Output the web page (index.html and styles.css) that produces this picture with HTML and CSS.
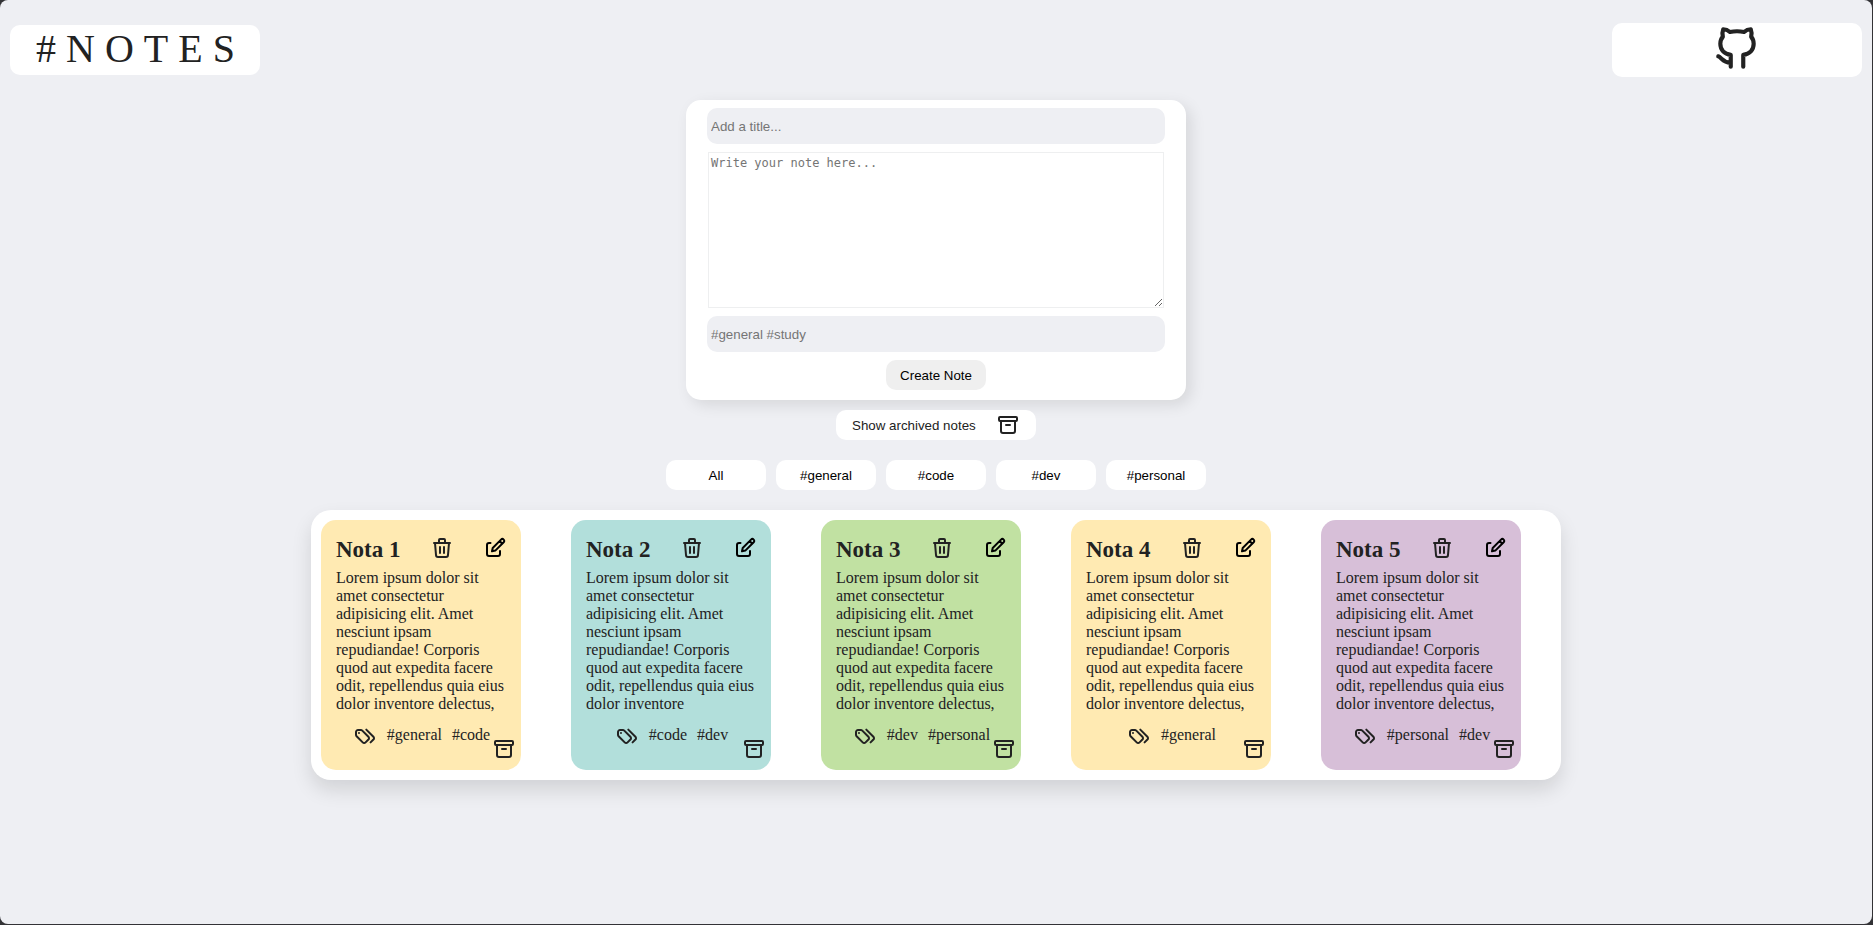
FILE: index.html
```
<!DOCTYPE html>
<html lang="en">
<head>
<meta charset="utf-8">
<title>#NOTES</title>
<link rel="stylesheet" href="styles.css">
</head>
<body>
<svg class="sprite" aria-hidden="true">
  <symbol id="trash" viewBox="0 0 24 24"><path d="M4 7h16M10 11v6M14 11v6M5 7l1 12a2 2 0 0 0 2 2h8a2 2 0 0 0 2-2l1-12M9 7V4a1 1 0 0 1 1-1h4a1 1 0 0 1 1 1v3"/></symbol>
  <symbol id="edit" viewBox="0 0 24 24"><path d="M7.500 7H6a2 2 0 0 0-2 2v9a2 2 0 0 0 2 2h9a2 2 0 0 0 2-2v-3"/><path d="M9 15.200l.7-3.200L18 3.600a1.900 1.900 0 0 1 2.700 2.700L12.300 14.600zM16.600 5l2.700 2.700"/></symbol>
  <symbol id="archive" viewBox="0 0 24 24"><rect x="3" y="4" width="18" height="4" rx="1"/><path d="M5 8v10a2 2 0 0 0 2 2h10a2 2 0 0 0 2-2V8M10 12h4"/></symbol>
  <symbol id="tags" viewBox="0 0 24 24"><path d="M7.859 6H5.025A2.025 2.025 0 0 0 3 8.025v2.834c0 .537.213 1.052.593 1.432l6.116 6.116a2.025 2.025 0 0 0 2.864 0l2.834-2.834a2.025 2.025 0 0 0 0-2.864L9.29 6.593A2.025 2.025 0 0 0 7.859 6zM17.573 18.407l2.834-2.834a2.025 2.025 0 0 0 0-2.864L13.29 5.593M6 9h-.01"/></symbol>
</svg>
<div class="app">
  <header class="topbar">
    <h1 class="logo">#NOTES</h1>
    <a class="github" href="#" aria-label="GitHub">
      <svg viewBox="0 0 24 24"><path d="M9 21v-5.7C5.9 14.9 4 12.9 4 10c0-1.4.4-2.5 1.2-3.4C4.9 5.3 5 4 5.4 3c1.3 0 2.3.5 3.2 1.3 2-.4 4.8-.4 6.8 0C16.3 3.500 17.300 3 18.600 3c.4 1 .5 2.300.2 3.600.8.9 1.200 2 1.200 3.400 0 2.900-1.900 4.900-5 5.300V21M3 16c1.700.6 2.300 3.200 6 3"/></svg>
    </a>
  </header>
  <main class="main">
    <form class="note-form">
      <input class="field" type="text" placeholder="Add a title..." aria-label="Title">
      <textarea class="note-text" placeholder="Write your note here..." aria-label="Note"></textarea>
      <input class="field" type="text" placeholder="#general #study" aria-label="Tags">
      <button class="pill create" type="button">Create Note</button>
    </form>
    <button class="pill show-archived" type="button">Show archived notes <svg class="icon"><use href="#archive"/></svg></button>
    <nav class="filters" aria-label="Filter by tag">
      <button class="pill" type="button">All</button>
      <button class="pill" type="button">#general</button>
      <button class="pill" type="button">#code</button>
      <button class="pill" type="button">#dev</button>
      <button class="pill" type="button">#personal</button>
    </nav>
    <section class="notes" aria-label="Notes">
      <article class="note yellow">
        <div class="note-head"><h2>Nota 1</h2>
          <button class="icon-btn" type="button" aria-label="Delete"><svg class="icon"><use href="#trash"/></svg></button>
          <button class="icon-btn edit" type="button" aria-label="Edit"><svg class="icon"><use href="#edit"/></svg></button></div>
        <p class="note-body">Lorem ipsum dolor sit amet consectetur adipisicing elit. Amet nesciunt ipsam repudiandae! Corporis quod aut expedita facere odit, repellendus quia eius dolor inventore delectus,</p>
        <div class="tags"><svg class="icon"><use href="#tags"/></svg><span>#general</span><span>#code</span></div>
        <button class="icon-btn archive" type="button" aria-label="Archive"><svg class="icon"><use href="#archive"/></svg></button>
      </article>
      <article class="note teal">
        <div class="note-head"><h2>Nota 2</h2>
          <button class="icon-btn" type="button" aria-label="Delete"><svg class="icon"><use href="#trash"/></svg></button>
          <button class="icon-btn edit" type="button" aria-label="Edit"><svg class="icon"><use href="#edit"/></svg></button></div>
        <p class="note-body">Lorem ipsum dolor sit amet consectetur adipisicing elit. Amet nesciunt ipsam repudiandae! Corporis quod aut expedita facere odit, repellendus quia eius dolor inventore</p>
        <div class="tags"><svg class="icon"><use href="#tags"/></svg><span>#code</span><span>#dev</span></div>
        <button class="icon-btn archive" type="button" aria-label="Archive"><svg class="icon"><use href="#archive"/></svg></button>
      </article>
      <article class="note green">
        <div class="note-head"><h2>Nota 3</h2>
          <button class="icon-btn" type="button" aria-label="Delete"><svg class="icon"><use href="#trash"/></svg></button>
          <button class="icon-btn edit" type="button" aria-label="Edit"><svg class="icon"><use href="#edit"/></svg></button></div>
        <p class="note-body">Lorem ipsum dolor sit amet consectetur adipisicing elit. Amet nesciunt ipsam repudiandae! Corporis quod aut expedita facere odit, repellendus quia eius dolor inventore delectus,</p>
        <div class="tags"><svg class="icon"><use href="#tags"/></svg><span>#dev</span><span>#personal</span></div>
        <button class="icon-btn archive" type="button" aria-label="Archive"><svg class="icon"><use href="#archive"/></svg></button>
      </article>
      <article class="note yellow">
        <div class="note-head"><h2>Nota 4</h2>
          <button class="icon-btn" type="button" aria-label="Delete"><svg class="icon"><use href="#trash"/></svg></button>
          <button class="icon-btn edit" type="button" aria-label="Edit"><svg class="icon"><use href="#edit"/></svg></button></div>
        <p class="note-body">Lorem ipsum dolor sit amet consectetur adipisicing elit. Amet nesciunt ipsam repudiandae! Corporis quod aut expedita facere odit, repellendus quia eius dolor inventore delectus,</p>
        <div class="tags"><svg class="icon"><use href="#tags"/></svg><span>#general</span></div>
        <button class="icon-btn archive" type="button" aria-label="Archive"><svg class="icon"><use href="#archive"/></svg></button>
      </article>
      <article class="note purple">
        <div class="note-head"><h2>Nota 5</h2>
          <button class="icon-btn" type="button" aria-label="Delete"><svg class="icon"><use href="#trash"/></svg></button>
          <button class="icon-btn edit" type="button" aria-label="Edit"><svg class="icon"><use href="#edit"/></svg></button></div>
        <p class="note-body">Lorem ipsum dolor sit amet consectetur adipisicing elit. Amet nesciunt ipsam repudiandae! Corporis quod aut expedita facere odit, repellendus quia eius dolor inventore delectus,</p>
        <div class="tags"><svg class="icon"><use href="#tags"/></svg><span>#personal</span><span>#dev</span></div>
        <button class="icon-btn archive" type="button" aria-label="Archive"><svg class="icon"><use href="#archive"/></svg></button>
      </article>
    </section>
  </main>
</div>
</body>
</html>
```
FILE: styles.css
```
* {
  box-sizing: border-box;
  margin: 0;
  padding: 0;
}

html {
  background: #333336;
}

body {
  padding: 0 1px 1px 0;
  color: #222;
  font-family: "Liberation Serif", "Times New Roman", serif;
  font-size: 16px;
}

.sprite {
  display: none;
}

.app {
  min-height: calc(100vh - 1px);
  background: #eeeff3;
  border-radius: 8px;
}

svg {
  display: block;
  fill: none;
  stroke: currentColor;
  stroke-width: 2;
  stroke-linecap: round;
  stroke-linejoin: round;
}

.icon {
  flex: none;
  width: 24px;
  height: 24px;
}

.topbar {
  display: flex;
  align-items: center;
  justify-content: space-between;
  height: 100px;
  padding: 0 10px;
}

.logo {
  width: 250px;
  padding: 0 0 2px 26px;
  background: #fff;
  border-radius: 10px;
  font-size: 40px;
  font-weight: 400;
  line-height: 48px;
  letter-spacing: 10px;
}

.github {
  display: flex;
  justify-content: center;
  width: 250px;
  height: 54px;
  background: #fff;
  border-radius: 10px;
  color: #222;
}

.github svg {
  width: 50px;
  height: 50px;
}

.main {
  display: flex;
  flex-direction: column;
  align-items: center;
}

.note-form {
  display: flex;
  flex-direction: column;
  align-items: center;
  gap: 8px;
  width: 500px;
  max-width: 100%;
  padding: 8px 21px 10px;
  background: #fff;
  border-radius: 15px;
  box-shadow: 5px 5px 15px rgba(0, 0, 0, 0.1);
}

.field {
  width: 100%;
  height: 36px;
  padding: 0 4px;
  border: 0;
  border-radius: 10px;
  background: #eeeff3;
  font-family: "Liberation Sans", Arial, sans-serif;
}

.note-text {
  width: calc(100% - 2px);
  height: 156px;
  padding: 3px 2px;
  border: 1px solid #eeeff0;
  font-family: "DejaVu Sans Mono", monospace;
  font-size: 12px;
}

.field::placeholder,
.note-text::placeholder {
  color: #757575;
}

.pill {
  width: 100px;
  height: 30px;
  border: 0;
  border-radius: 10px;
  background: #fff;
  color: #000;
  font-family: "Liberation Sans", Arial, sans-serif;
}

.create {
  background: #efefef;
}

.show-archived {
  display: flex;
  align-items: center;
  justify-content: space-between;
  width: 200px;
  margin-top: 10px;
  padding: 0 16px;
  color: #222;
}

.filters {
  display: flex;
  gap: 10px;
  margin: 20px 0;
}

.notes {
  display: flex;
  flex-wrap: wrap;
  gap: 50px;
  width: 1250px;
  max-width: 100%;
  padding: 10px;
  background: #fff;
  border-radius: 20px;
  box-shadow: 0 10px 20px rgba(0, 0, 0, 0.12);
}

.note {
  position: relative;
  width: 200px;
  height: 250px;
  padding: 16px 14px 16px 15px;
  border-radius: 15px;
}

.yellow { background: #ffeab2; }
.teal { background: #b2dfdb; }
.green { background: #c1e1a2; }
.purple { background: #d7bfd8; }

.note-head {
  display: flex;
  align-items: flex-start;
  justify-content: space-between;
  height: 32px;
}

.note-head h2 {
  padding-top: 2px;
  font-size: 23px;
  line-height: 24px;
}

.icon-btn {
  border: 0;
  background: none;
  color: #222;
}

.icon-btn.edit {
  color: #000;
}

.icon-btn.archive {
  position: absolute;
  right: 5px;
  bottom: 9px;
}

.note-body {
  height: 145px;
  padding-top: 1px;
  overflow: hidden;
  line-height: 18px;
}

.tags {
  display: flex;
  justify-content: center;
  gap: 10px;
  margin-top: 11px;
  line-height: 22px;
}
```
